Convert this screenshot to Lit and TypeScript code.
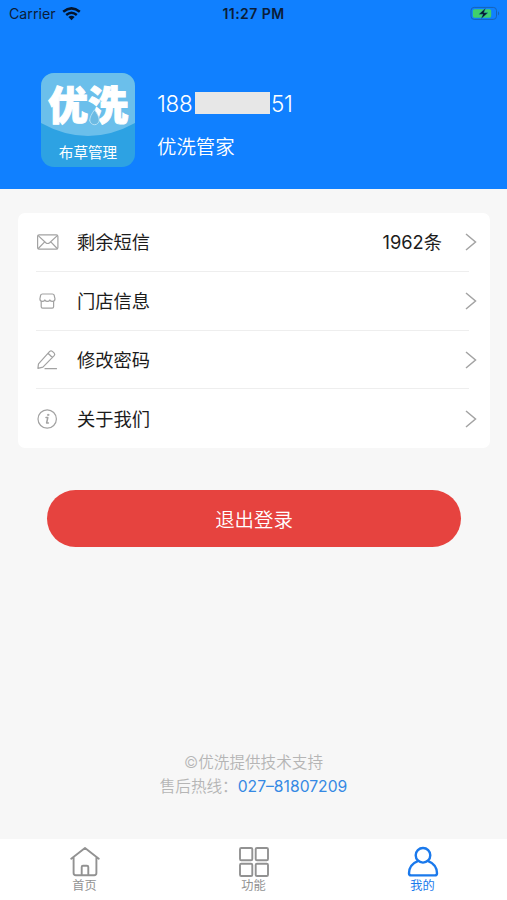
import { LitElement, html, css, svg } from "lit";
import { customElement, property } from "lit/decorators.js";

const icons: Record<string, unknown> = {
  mail: svg`<rect x="1.6" y="4.9" width="20.3" height="14.2" rx="1.6"/><path d="M2.2 5.6 9.8 12.7Q11.7 14.3 13.6 12.7L21.3 5.6M2.3 18.5 8.7 11.9M21.2 18.5 14.8 11.9"/>`,
  shop: svg`<path d="M6.4 5H16.4Q17.8 5 18.2 6.3L19 9.8Q19 12.4 16.5 12.4Q14.6 12.4 13.9 10.9Q13.2 12.4 11.4 12.4Q9.6 12.4 8.9 10.9Q8.2 12.4 6.3 12.4Q3.9 12.4 3.9 9.8L4.6 6.3Q5 5 6.4 5ZM5.2 12.4V17.8Q5.2 19.2 6.6 19.2H16.2Q17.6 19.2 17.6 17.8V12.4"/>`,
  edit: svg`<path d="M1.9 20.4 2.5 15.8 13.7 3.4Q15 2.2 16.4 3.4L18.2 5.1Q19.3 6.4 18.2 7.7L6.9 19.1ZM12 5.3 16.4 9.5M9 20.7H20.5"/>`,
  info: svg`<circle cx="11.2" cy="12" r="9.2"/><path stroke-width="1.5" d="M10 10.5H11.8L10.6 16H12.4"/><circle cx="12.1" cy="7.9" r=".7" stroke-width="1"/>`,
};

const tabIcons: Record<string, unknown> = {
  home: svg`<path d="M2.2 12.7 16 2 29.8 12.7M4.6 11.2V27Q4.6 29.2 6.8 29.2H25.2Q27.4 29.2 27.4 27V11.2M12.7 29V21.1Q12.7 19.7 14 19.7H17.9Q19.3 19.7 19.3 21.1V29"/>`,
  grid: svg`<rect x="2" y="2" width="12.3" height="12.3" rx="1.3"/><rect x="17.7" y="2" width="12.3" height="12.3" rx="1.3"/><rect x="2" y="17.7" width="12.3" height="12.3" rx="1.3"/><rect x="17.7" y="17.7" width="12.3" height="12.3" rx="1.3"/>`,
  user: svg`<circle cx="16" cy="9.3" r="7.3"/><path d="M10.8 15.1Q2.2 18.5 2 27.2Q2 29.4 4.2 29.4H27.8Q30 29.4 30 27.2Q29.8 18.5 21.2 15.1"/>`,
};

@customElement("menu-row")
class MenuRow extends LitElement {
  @property() icon = "";
  @property() label = "";
  @property() value = "";

  static styles = css`
    :host { display: flex; align-items: center; flex: 1; padding: 0 13px 0 18px; position: relative; }
    :host(:not(:last-child))::after { content: ""; position: absolute; left: 18px; right: 21px; bottom: 0; height: 1px; background: #eee; }
    .icon { width: 24px; height: 24px; fill: none; stroke: #a2a2a2; stroke-width: 1.2; stroke-linejoin: round; stroke-linecap: round; }
    .label { flex: 1; margin: -2px 0 0 17px; }
    .value { margin: -2px 23px 0 0; }
    .chevron { width: 12px; height: 18px; fill: none; stroke: #a3a3a3; stroke-width: 1.5; }
  `;

  render() {
    return html`
      <svg class="icon" viewBox="0 0 24 24">${icons[this.icon]}</svg>
      <span class="label">${this.label}</span>
      <span class="value">${this.value}</span>
      <svg class="chevron" viewBox="0 0 12 18"><path d="M1 1 10.5 9 1 17" /></svg>
    `;
  }
}

@customElement("tab-item")
class TabItem extends LitElement {
  @property() icon = "";
  @property() label = "";

  static styles = css`
    :host { flex: 1; display: flex; flex-direction: column; align-items: center; padding-top: 7px; color: #929292; }
    svg { width: 32px; height: 32px; fill: none; stroke: currentColor; stroke-width: 1.9; stroke-linejoin: round; stroke-linecap: round; }
    .label { margin-top: 1px; font-size: 12.2px; line-height: 14px; }
    :host([active]) { color: #1a79ec; }
    :host([active]) svg { stroke-width: 2.4; }
  `;

  render() {
    return html`
      <svg viewBox="0 0 32 32">${tabIcons[this.icon]}</svg>
      <span class="label">${this.label}</span>
    `;
  }
}

@customElement("app-root")
class AppRoot extends LitElement {
  static styles = css`
    :host { display: flex; flex-direction: column; width: 507px; height: 900px; overflow: hidden; background: #f7f7f7; color: #1c1c1c; font-family: Inter, "Noto Sans CJK SC", sans-serif; }
    .header { height: 189px; background: #1080ff; color: #fff; }
    .status { height: 28px; display: grid; grid-template-columns: 1fr auto 1fr; align-items: center; color: #0b1d38; font-size: 14.2px; line-height: 28px; }
    .carrier { display: flex; align-items: center; gap: 6px; padding-left: 9px; }
    .wifi { width: 19px; height: 14px; fill: none; stroke: #04152c; stroke-width: 2.5; }
    .time { font-weight: 600; font-size: 14px; letter-spacing: .45px; }
    .battery { justify-self: end; width: 31px; height: 15px; margin: -2px 6px 0 0; }
    .profile { display: flex; padding: 45px 0 0 41px; gap: 22px; }
    .logo { width: 94px; height: 94px; border-radius: 13px; overflow: hidden; position: relative; display: flex; flex-direction: column; align-items: center; background: #2da2e3; }
    .art { position: absolute; inset: 0; width: 94px; height: 94px; }
    .brand { position: relative; margin-top: 9px; font-size: 40px; line-height: 48px; font-weight: 900; -webkit-text-stroke: 1px #fff; white-space: nowrap; }
    .sub { position: relative; margin-top: 12px; font-size: 14.6px; line-height: 22px; font-weight: 400; }
    .drop { position: absolute; left: 47px; top: 36px; width: 13px; height: 17px; }
    .phone { display: flex; align-items: center; height: 24px; margin-top: 18px; font-size: 22.4px; font-weight: 350; letter-spacing: -.3px; }
    .mask { width: 75px; height: 22px; margin: -1px 1px 0 0; background: #e7e7e7; }
    .digits { width: 38px; }
    .name { margin-top: 18px; font-size: 19.4px; line-height: 28px; font-weight: 350; }
    .card { display: flex; flex-direction: column; height: 235px; margin: 24px 17px 0 18px; background: #fff; border-radius: 7px; font-size: 18.3px; }
    .logout { height: 57px; margin: 42px 46px 0 47px; padding: 3px 0 0; border: 0; border-radius: 29px; background: #e6433f; color: #fff; font: 350 19.4px/54px Inter, "Noto Sans CJK SC", sans-serif; }
    .support { margin-top: auto; margin-bottom: 41px; text-align: center; color: #b5b5b5; font-size: 15.6px; line-height: 23.5px; font-weight: 350; }
    .tel { color: #3589e4; font-weight: 400; font-size: 15.7px; }
    .tabs { display: flex; height: 61px; background: #fff; }
  `;

  render() {
    return html`
      <header class="header">
        <div class="status">
          <div class="carrier">
            <span>Carrier</span>
            <svg class="wifi" viewBox="0 0 19 14"><path d="M1.2 4.8Q9.5-2 17.8 4.8M4.2 8Q9.5 3.6 14.8 8" /><path fill="#04152c" stroke="none" d="M6.4 10Q9.5 7.5 12.6 10L9.5 13.3Z" /></svg>
          </div>
          <span class="time">11:27 PM</span>
          <svg class="battery" viewBox="0 0 31 15">
            <rect x="1" y="1.4" width="25.5" height="12" rx="3.2" fill="none" stroke="#1763b7" />
            <rect x="2.8" y="3.2" width="18.4" height="8.5" rx="1.6" fill="#3fd06c" />
            <path d="M28 5.2Q30.4 7.4 28 9.6Z" fill="#1763b7" />
            <path d="M15.7 2 8.9 8.2H13L11 13 17.9 6.8H13.8Z" fill="#071526" stroke="#1c8bc0" stroke-width=".4" />
          </svg>
        </div>
        <div class="profile">
          <div class="logo">
            <svg class="art" viewBox="0 0 94 94"><path d="M0 0H94V50Q47 76 0 50Z" fill="#6bbfeb" /></svg>
            <span class="brand">优洗</span>
            <svg class="drop" viewBox="0 0 15 20"><path d="M7.5 1Q13 8.5 13 13A5.5 5.5 0 0 1 2 13Q2 8.5 7.5 1Z" fill="#6cbae3" stroke="#bde4f5" /></svg>
            <span class="sub">布草管理</span>
          </div>
          <div>
            <div class="phone"><span class="digits">188</span><span class="mask"></span><span>51</span></div>
            <div class="name">优洗管家</div>
          </div>
        </div>
      </header>
      <main class="card">
        <menu-row icon="mail" label="剩余短信" value="1962条"></menu-row>
        <menu-row icon="shop" label="门店信息"></menu-row>
        <menu-row icon="edit" label="修改密码"></menu-row>
        <menu-row icon="info" label="关于我们"></menu-row>
      </main>
      <button class="logout">退出登录</button>
      <footer class="support">
        <div>©优洗提供技术支持</div>
        <div>售后热线：<span class="tel">027–81807209</span></div>
      </footer>
      <nav class="tabs">
        <tab-item icon="home" label="首页"></tab-item>
        <tab-item icon="grid" label="功能"></tab-item>
        <tab-item icon="user" label="我的" active></tab-item>
      </nav>
    `;
  }
}
